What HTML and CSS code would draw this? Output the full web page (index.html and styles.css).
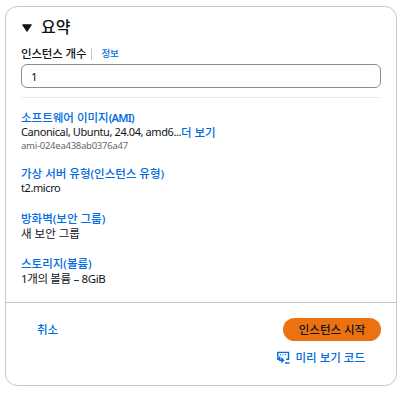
FILE: index.html
```
<!DOCTYPE html>
<html lang="ko">
<head>
<meta charset="utf-8">
<title>요약</title>
<link rel="stylesheet" href="styles.css">
</head>
<body>
<main class="card">
  <section class="body">
    <header class="header">
      <svg class="caret" width="10" height="8" viewBox="0 0 10 8"><path d="M.6 .8h8.8L5 7.4z" fill="#0f141a" stroke="#0f141a" stroke-width="1" stroke-linejoin="round"/></svg>
      <h1>요약</h1>
    </header>
    <div class="label-row">
      <label for="count">인스턴스 개수</label>
      <a class="info">정보</a>
    </div>
    <input id="count" class="input" type="text" value="1">
    <div class="details">
      <div class="item">
        <a class="key">소프트웨어 이미지<b>(AMI)</b></a>
        <div class="value"><span class="os">Canonical, Ubuntu, 24.04, amd6...</span><a class="more">더 보기</a></div>
        <div class="note">ami-024ea438ab0376a47</div>
      </div>
      <div class="item">
        <a class="key">가상 서버 유형(인스턴스 유형)</a>
        <div class="value"><span class="os">t2.micro</span></div>
      </div>
      <div class="item">
        <a class="key">방화벽(보안 그룹)</a>
        <div class="value">새 보안 그룹</div>
      </div>
      <div class="item">
        <a class="key">스토리지(볼륨)</a>
        <div class="value volume">1개의 볼륨 – 8GiB</div>
      </div>
    </div>
  </section>
  <footer class="footer">
    <a class="cancel">취소</a>
    <div class="actions">
      <button class="launch">인스턴스 시작</button>
      <a class="preview">
        <svg width="13" height="13" viewBox="0 0 13 13" fill="none" stroke="#006ce0" stroke-width="1.4"><path d="M2 8.2H.8V1.4h10.7v6.8H9.2"/><path d="M3 3.7h1M5.5 3.7h1M8 3.7h1" stroke-width="1"/><path d="M2.7 5.6v3.6h3.6M4.2 6.9l2.4 2.3-2.4 2.4M8 12h4.5"/></svg>
        <span>미리 보기 코드</span>
      </a>
    </div>
  </footer>
</main>
</body>
</html>
```
FILE: styles.css
```
* { box-sizing: border-box; }
body {
  margin: 0;
  padding: 6px 10px 0 5px;
  background: #fff;
  color: #0f141a;
  font-family: "Noto Sans", "Noto Sans CJK KR", sans-serif;
  font-size: 11.5px;
  line-height: 15px;
  white-space: nowrap;
}
a { color: #006ce0; }
.card {
  width: 392px;
  height: 380px;
  border: 1px solid #c6c6cd;
  border-radius: 12px;
}
.body { height: 295px; padding: 9px 15px 0; }
.header { display: flex; align-items: center; gap: 9px; height: 21px; padding-left: 1px; }
.caret { margin-top: 3px; }
h1 { margin: 0; font-size: 16px; line-height: 21px; font-weight: 500; font-family: "Noto Sans CJK KR", sans-serif; }
.label-row { display: flex; align-items: center; height: 15px; margin-top: 9px; font-weight: 500; letter-spacing: -.15px; }
.info { height: 12px; margin-left: 5px; padding-left: 9px; border-left: 1px solid #c6c6cd; font-size: 9.5px; line-height: 12px; }
.input {
  display: block;
  width: 360px;
  height: 24px;
  margin-top: 3px;
  padding: 0 9px;
  border: 1px solid #8c8c94;
  border-radius: 6px;
  background: #fff;
  color: #0f141a;
  font: 11.5px "Noto Sans", sans-serif;
}
.details { display: flex; flex-direction: column; gap: 15px; width: 360px; margin-top: 9px; padding-top: 12px; border-top: 1px solid #ebebf0; }
.key { display: block; font-weight: 500; }
.key b { font-weight: 600; font-size: 11px; letter-spacing: -.7px; }
.value { display: flex; }
.os { margin-top: -1px; font-size: 11px; line-height: 16px; letter-spacing: -.41px; }
.volume { letter-spacing: -.35px; }
.more { font-weight: 500; letter-spacing: -.1px; }
.note { height: 11px; color: #656871; font-size: 9.5px; line-height: 11px; letter-spacing: -.25px; }
.footer { display: flex; justify-content: space-between; height: 83px; padding: 15px 15px 0 31px; border-top: 1px solid #c6c6cd; }
.cancel { height: 23px; line-height: 23px; font-weight: 500; }
.actions { display: flex; flex-direction: column; align-items: flex-end; gap: 9px; }
.launch { width: 98px; height: 23px; padding: 0; border: 0; border-radius: 12px; background: #ec7211; color: #0f141a; font: 500 11.5px/22px "Noto Sans", "Noto Sans CJK KR", sans-serif; }
.preview { display: flex; align-items: center; gap: 6px; height: 15px; margin-right: 16px; font-weight: 500; }
```
